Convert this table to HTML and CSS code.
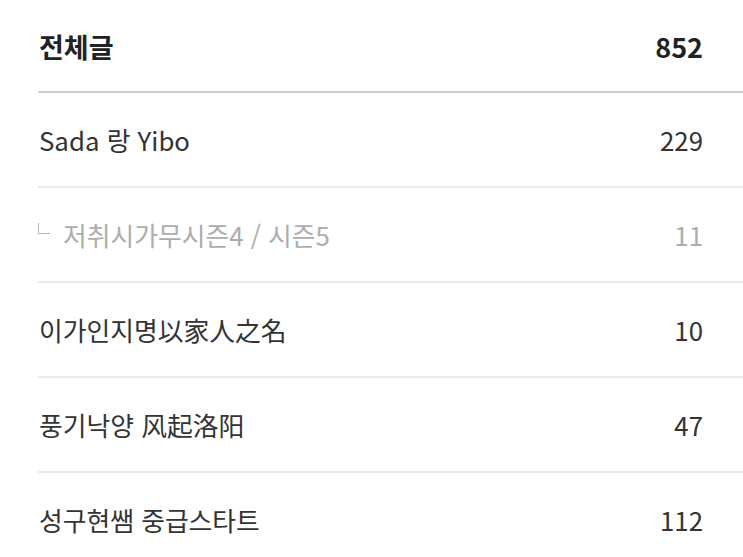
FILE: index.html
```html
<!DOCTYPE html>
<html lang="ko">
<head>
    <meta charset="UTF-8">
    <meta name="viewport" content="width=device-width, initial-scale=1.0">
    <title>카테고리</title>
    <link rel="stylesheet" href="styles.css">
</head>
<body>

    <div class="categoria">
        <div class="linha total">
            <span class="nome">전체글</span>
            <span class="num">852</span>
        </div>

        <div class="linha">
            <span class="nome">Sada 랑 Yibo</span>
            <span class="num">229</span>
        </div>

        <div class="linha sub">
            <span class="nome"><span class="marca"></span>저취시가무시즌4 / 시즌5</span>
            <span class="num">11</span>
        </div>

        <div class="linha">
            <span class="nome">이가인지명以家人之名</span>
            <span class="num">10</span>
        </div>

        <div class="linha">
            <span class="nome">풍기낙양 风起洛阳</span>
            <span class="num">47</span>
        </div>

        <div class="linha">
            <span class="nome">성구현쌤 중급스타트</span>
            <span class="num">112</span>
        </div>
    </div>

</body>
</html>
```

FILE: styles.css
```css
body {
  margin: 0;
  background-color: #fff;
  font-family: "Noto Sans CJK KR", "Noto Sans", sans-serif;
  color: #333;
}

.categoria {
  margin-left: 38px;
}

.linha {
  display: flex;
  justify-content: space-between;
  align-items: center;
  height: 93px;
  padding: 0 40px 0 1px;
  border-bottom: 2px solid #ebebeb;
  font-size: 25.8px;
}

.total {
  height: 89px;
  padding-top: 2px;
  border-bottom: 2px solid #cfcfcf;
  font-size: 27px;
  font-weight: bold;
  color: #222;
}

.sub {
  color: #adadad;
}

.sub .nome {
  display: flex;
  align-items: center;
}

.marca {
  width: 11px;
  height: 10px;
  border-left: 1.5px solid #b5b5b5;
  border-bottom: 1.5px solid #b5b5b5;
  margin: 0 13px 13px -1px;
}
```
